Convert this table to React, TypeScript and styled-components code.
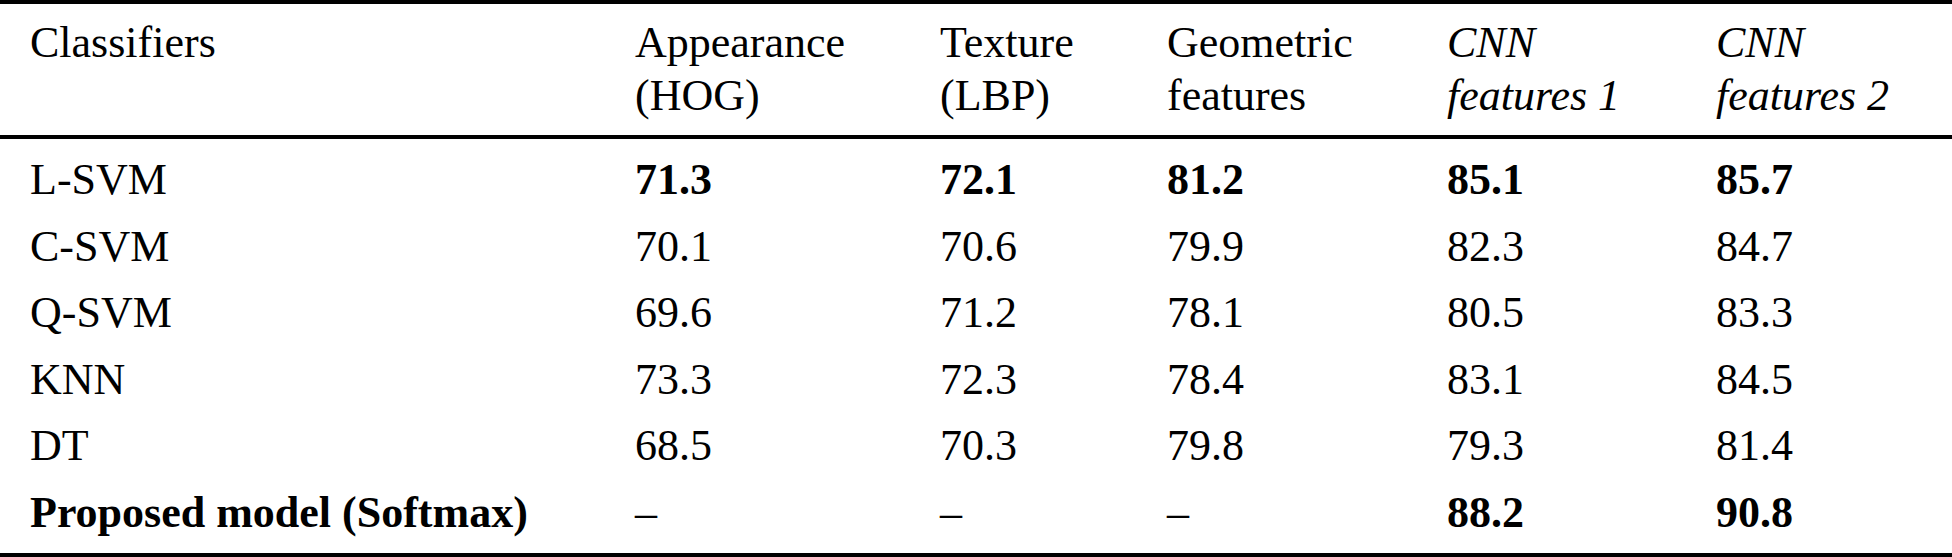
import React from "react";
import styled, { createGlobalStyle } from "styled-components";

const GlobalStyle = createGlobalStyle`
  html, body {
    margin: 0;
    padding: 0;
    background: #ffffff;
  }
`;

const Table = styled.div`
  width: 1952px;
  box-sizing: border-box;
  border-top: 4px solid #000;
  border-bottom: 4px solid #000;
  font-family: "Liberation Serif", "Times New Roman", serif;
  font-size: 44px;
  color: #000;
`;

const Grid = styled.div`
  display: grid;
  grid-template-columns: 605px 305px 227px 280px 269px 1fr;
  padding-left: 30px;
`;

const HeadRow = styled(Grid)`
  padding-top: 12px;
  padding-bottom: 13px;
  border-bottom: 4px solid #000;
  line-height: 53px;
`;

const Body = styled.div`
  padding-top: 8px;
  padding-bottom: 7px;
`;

const Row = styled(Grid)`
  height: 66.5px;
  line-height: 66.5px;
`;

const HeadCell = styled.div<{ $italic?: boolean }>`
  font-style: ${(p) => (p.$italic ? "italic" : "normal")};
  white-space: nowrap;
`;

const Cell = styled.div<{ $bold?: boolean }>`
  font-weight: ${(p) => (p.$bold ? 700 : 400)};
  white-space: nowrap;
`;

type Result = { name: string; bold?: boolean; values: string[]; strong: boolean[] };

const rows: Result[] = [
  { name: "L-SVM", values: ["71.3", "72.1", "81.2", "85.1", "85.7"], strong: [true, true, true, true, true] },
  { name: "C-SVM", values: ["70.1", "70.6", "79.9", "82.3", "84.7"], strong: [false, false, false, false, false] },
  { name: "Q-SVM", values: ["69.6", "71.2", "78.1", "80.5", "83.3"], strong: [false, false, false, false, false] },
  { name: "KNN", values: ["73.3", "72.3", "78.4", "83.1", "84.5"], strong: [false, false, false, false, false] },
  { name: "DT", values: ["68.5", "70.3", "79.8", "79.3", "81.4"], strong: [false, false, false, false, false] },
  {
    name: "Proposed model (Softmax)",
    bold: true,
    values: ["–", "–", "–", "88.2", "90.8"],
    strong: [false, false, false, true, true],
  },
];

export default function App() {
  return (
    <>
      <GlobalStyle />
      <Table>
        <HeadRow>
          <HeadCell>Classifiers</HeadCell>
          <HeadCell>
            Appearance
            <br />
            (HOG)
          </HeadCell>
          <HeadCell>
            Texture
            <br />
            (LBP)
          </HeadCell>
          <HeadCell>
            Geometric
            <br />
            features
          </HeadCell>
          <HeadCell $italic>
            CNN
            <br />
            features 1
          </HeadCell>
          <HeadCell $italic>
            CNN
            <br />
            features 2
          </HeadCell>
        </HeadRow>
        <Body>
          {rows.map((r) => (
            <Row key={r.name}>
              <Cell $bold={r.bold}>{r.name}</Cell>
              {r.values.map((v, i) => (
                <Cell key={i} $bold={r.strong[i]}>
                  {v}
                </Cell>
              ))}
            </Row>
          ))}
        </Body>
      </Table>
    </>
  );
}
